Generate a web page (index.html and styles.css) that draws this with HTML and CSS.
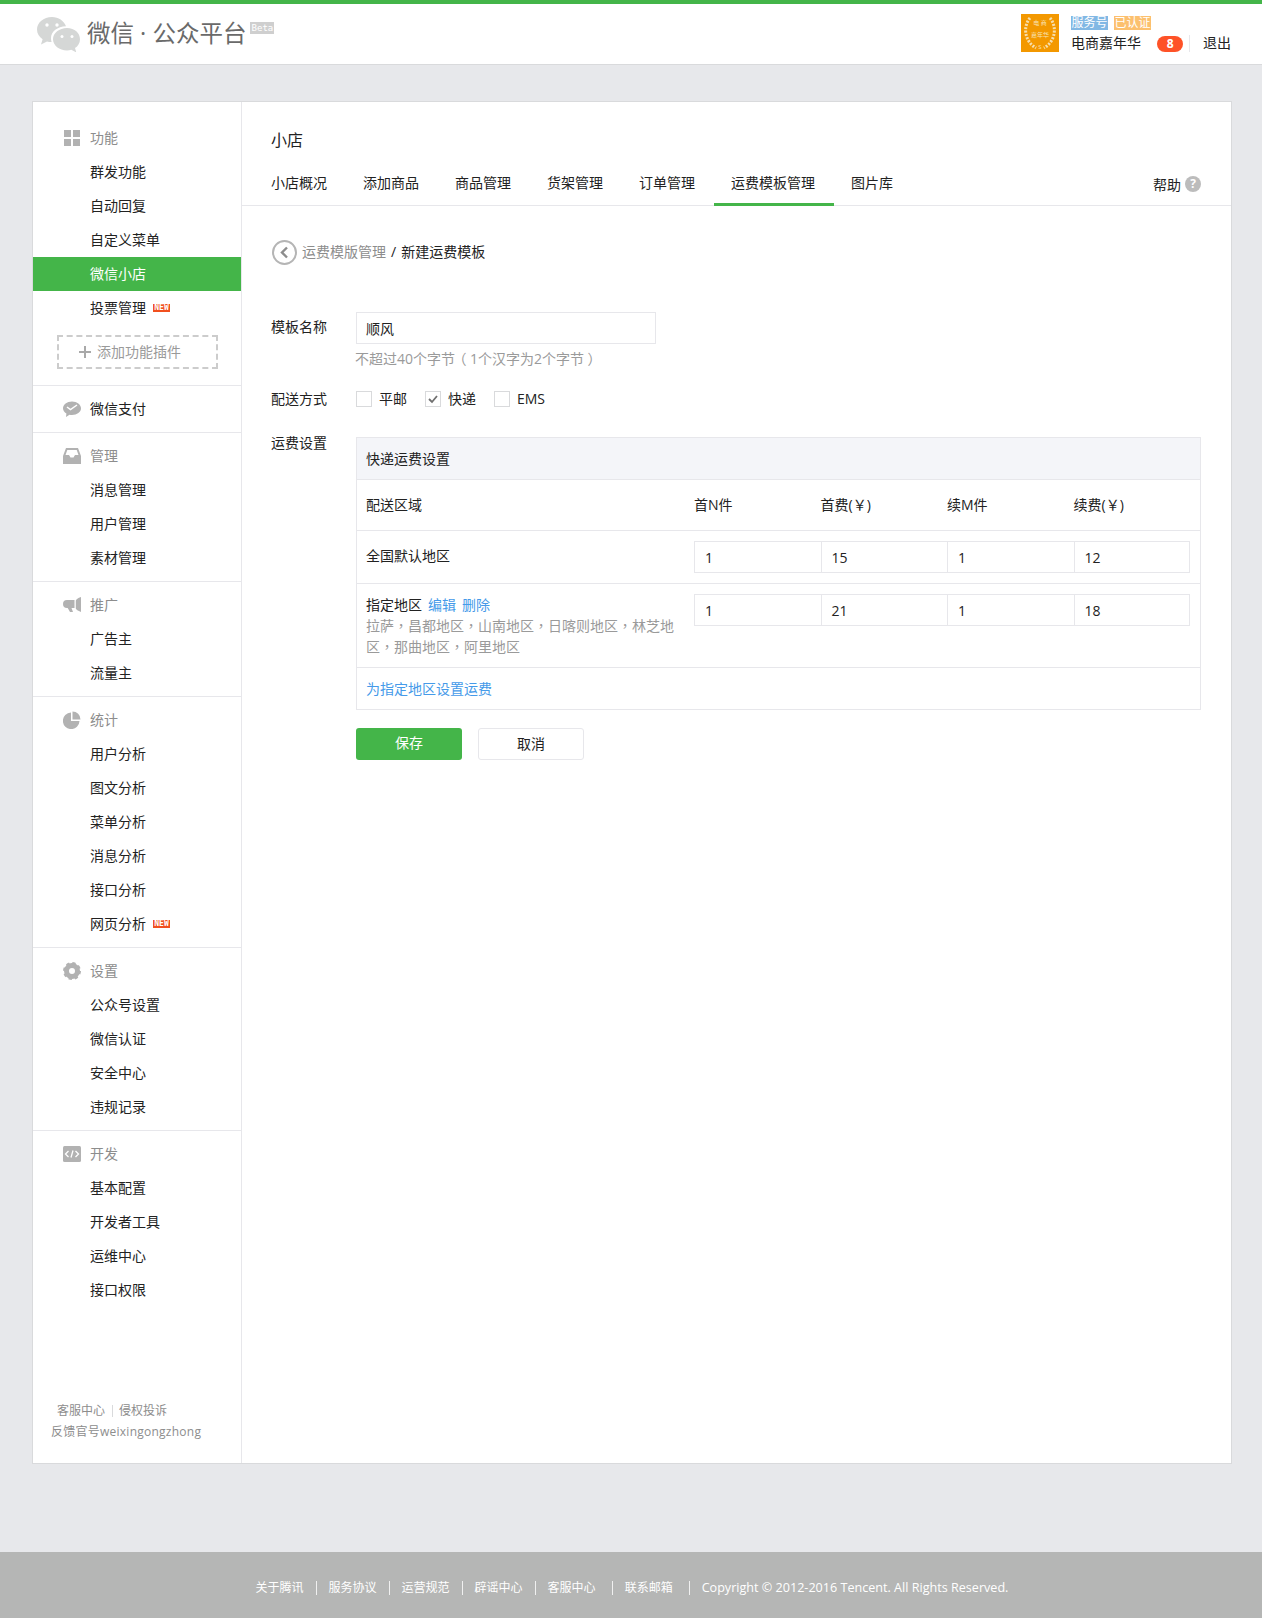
FILE: index.html
```html
<!DOCTYPE html>
<html lang="zh-CN">
<head>
<meta charset="utf-8">
<title>微信公众平台</title>
<link rel="stylesheet" href="styles.css">
</head>
<body>
<header class="top">
  <div class="brand">
    <svg class="logo" width="46" height="36" viewBox="0 0 46 36"><path fill="#d5d7d6" d="M16 1C7.500 1 1 6.600 1 13.600c0 4 2.200 7.400 5.600 9.700L5 28.500l6-3.100c1.500.4 3 .6 4.600.7-.4-1.300-.6-2.500-.6-3.800C15 15.700 21.500 10.500 30 10.300 27.900 4.900 22.500 1 16 1z"/><path fill="#d5d7d6" d="M31 12c-7.700 0-14 5-14 11.200S23.300 34.400 31 34.400c1.500 0 3-.2 4.300-.6l5 2.600-1.300-4.300c3-2.100 5-5.200 5-8.900C44 17 38.700 12 31 12z"/><circle cx="11" cy="9" r="1.700" fill="#fff"/><circle cx="21" cy="9" r="1.700" fill="#fff"/><circle cx="26" cy="20.500" r="1.500" fill="#fff"/><circle cx="36" cy="20.500" r="1.500" fill="#fff"/></svg>
    <span class="brand-name">微信 · 公众平台</span>
    <span class="beta">Beta</span>
  </div>
  <div class="account">
    <div class="avatar">
      <svg class="wreath" width="38" height="38" viewBox="0 0 38 38"><g fill="none" stroke="#f7dfae" stroke-width="3" stroke-dasharray="2 1.400"><path d="M9 4C2 12 3 27 15 34"/><path d="M29 4c7 8 6 23-6 30"/></g></svg>
      <span class="avatar-text">电 商<br>嘉年华<br>S</span>
    </div>
    <div class="acc-info">
      <div class="tags"><span class="tag tag-blue">服务号</span><span class="tag tag-yellow">已认证</span></div>
      <div class="acc-row"><span class="acc-name">电商嘉年华</span><span class="count">8</span><span class="acc-sep"></span><span class="logout">退出</span></div>
    </div>
  </div>
</header>

<div class="page">
  <div class="panel">
    <nav class="side">
      <section class="group group-first">
        <h4 class="g-title"><svg class="g-ico" width="18" height="18" viewBox="0 0 18 18"><path fill="#b2b2b2" d="M1 1h7v7H1zM10 1h7v7h-7zM1 10h7v7H1zM10 10h7v7h-7z"/></svg>功能</h4>
        <a class="item">群发功能</a>
        <a class="item">自动回复</a>
        <a class="item">自定义菜单</a>
        <a class="item item-on">微信小店</a>
        <a class="item">投票管理<span class="new">NEW</span></a>
        <div class="plugin"><svg class="plus" width="12" height="12" viewBox="0 0 12 12"><path fill="#a9a9a9" d="M5 0h2v5h5v2H7v5H5V7H0V5h5z"/></svg>添加功能插件</div>
      </section>
      <section class="group">
        <h4 class="g-title g-plain"><svg class="g-ico" width="18" height="18" viewBox="0 0 18 18"><path fill="#b2b2b2" d="M9 1.500c5 0 9 3 9 6.800s-4 6.700-9 6.700c-.9 0-1.700-.1-2.500-.3L3 17l.4-3.500C1.300 12.200 0 10.400 0 8.300 0 4.500 4 1.500 9 1.500z"/><path fill="none" stroke="#fff" stroke-width="1.500" d="M4 7l3.500 2.500L14 5"/></svg>微信支付</h4>
      </section>
      <section class="group">
        <h4 class="g-title"><svg class="g-ico" width="18" height="18" viewBox="0 0 18 18"><path fill="#b2b2b2" fill-rule="evenodd" d="M3 1h12l3 8v8H0V9zM4.300 3 2.500 8H6l1.500 2.500h3L12 8h3.500l-1.800-5z"/></svg>管理</h4>
        <a class="item">消息管理</a>
        <a class="item">用户管理</a>
        <a class="item">素材管理</a>
      </section>
      <section class="group">
        <h4 class="g-title"><svg class="g-ico" width="18" height="18" viewBox="0 0 18 18"><path fill="#b2b2b2" d="M4 4h7.500v8H8.500l1.500 4H7l-2.300-4H4a4 4 0 0 1 0-8zM18 1v15c-3-1.200-5-2.500-5.200-3.500V4.500C13 3.500 15 2 18 1z"/></svg>推广</h4>
        <a class="item">广告主</a>
        <a class="item">流量主</a>
      </section>
      <section class="group">
        <h4 class="g-title"><svg class="g-ico" width="18" height="18" viewBox="0 0 18 18"><path fill="#b2b2b2" d="M8 1.500V10h8.500A8.300 8.300 0 1 1 8 1.500zM9.500 .5a8 8 0 0 1 8 8h-8z"/></svg>统计</h4>
        <a class="item">用户分析</a>
        <a class="item">图文分析</a>
        <a class="item">菜单分析</a>
        <a class="item">消息分析</a>
        <a class="item">接口分析</a>
        <a class="item">网页分析<span class="new">NEW</span></a>
      </section>
      <section class="group">
        <h4 class="g-title"><svg class="g-ico" width="18" height="18" viewBox="0 0 18 18"><circle cx="9" cy="9" r="5.500" fill="none" stroke="#b2b2b2" stroke-width="5"/><circle cx="9" cy="9" r="8" fill="none" stroke="#b2b2b2" stroke-width="2" stroke-dasharray="3.300 3"/></svg>设置</h4>
        <a class="item">公众号设置</a>
        <a class="item">微信认证</a>
        <a class="item">安全中心</a>
        <a class="item">违规记录</a>
      </section>
      <section class="group">
        <h4 class="g-title"><svg class="g-ico" width="18" height="18" viewBox="0 0 18 18"><rect y="1" width="18" height="16" rx="1.500" fill="#b2b2b2"/><path fill="none" stroke="#fff" stroke-width="1.300" d="M5.500 6 2.500 9l3 3M12.500 6l3 3-3 3M10 5.500 8 12.500"/></svg>开发</h4>
        <a class="item">基本配置</a>
        <a class="item">开发者工具</a>
        <a class="item">运维中心</a>
        <a class="item">接口权限</a>
      </section>
      <div class="side-foot">
        <div class="sf-line1"><span class="sf-link">客服中心</span><span class="sf-link">侵权投诉</span></div>
        <div class="sf-line2">反馈官号weixingongzhong</div>
      </div>
    </nav>

    <main class="main">
      <h2 class="m-title">小店</h2>
      <div class="tabs">
        <a class="tab tab-first">小店概况</a>
        <a class="tab">添加商品</a>
        <a class="tab">商品管理</a>
        <a class="tab">货架管理</a>
        <a class="tab">订单管理</a>
        <a class="tab tab-on">运费模板管理</a>
        <a class="tab">图片库</a>
        <span class="help">帮助<span class="help-ico">?</span></span>
      </div>
      <div class="body">
        <div class="crumb">
          <svg class="back" width="25" height="25" viewBox="0 0 25 25"><circle cx="12.500" cy="12.500" r="11.500" fill="none" stroke="#b5b5b5" stroke-width="2"/><path fill="none" stroke="#8d8d8d" stroke-width="2.400" d="M15 7.500l-5 5 5 5"/></svg>
          <span class="crumb-link">运费模版管理</span><span class="crumb-sep">/</span><span class="crumb-now">新建运费模板</span>
        </div>

        <div class="f-row f-name">
          <label class="f-label">模板名称</label>
          <div class="f-ctl">
            <div class="input input-name">顺风</div>
            <p class="tip" lang="zh-TW">不超过40个字节<span class="paren">（</span>1个汉字为2个字节<span class="paren">）</span></p>
          </div>
        </div>

        <div class="f-row f-ship">
          <label class="f-label">配送方式</label>
          <div class="checks">
            <span class="check"><i class="box"></i>平邮</span>
            <span class="check"><i class="box"><svg width="14" height="14" viewBox="0 0 14 14"><path fill="none" stroke="#6f6f6f" stroke-width="1.800" d="M3 7l3 3 5-6"/></svg></i>快递</span>
            <span class="check"><i class="box"></i>EMS</span>
          </div>
        </div>

        <div class="f-row f-fee">
          <label class="f-label">运费设置</label>
          <div class="fee">
            <div class="fee-head">快递运费设置</div>
            <div class="fee-row fee-cols">
              <div class="area">配送区域</div>
              <div class="cols"><span>首N件</span><span>首费(￥)</span><span>续M件</span><span>续费(￥)</span></div>
            </div>
            <div class="fee-row fee-default">
              <div class="area">全国默认地区</div>
              <div class="cells"><span class="cell">1</span><span class="cell">15</span><span class="cell">1</span><span class="cell">12</span></div>
            </div>
            <div class="fee-row fee-custom">
              <div class="area">指定地区<a class="lnk lnk-a">编辑</a><a class="lnk lnk-b">删除</a>
                <p class="regions" lang="zh-TW">拉萨，昌都地区，山南地区，日喀则地区，林芝地区，那曲地区，阿里地区</p>
              </div>
              <div class="cells"><span class="cell">1</span><span class="cell">21</span><span class="cell">1</span><span class="cell">18</span></div>
            </div>
            <div class="fee-add"><a class="lnk">为指定地区设置运费</a></div>
          </div>
        </div>

        <div class="actions">
          <a class="btn btn-save">保存</a>
          <a class="btn btn-cancel">取消</a>
        </div>
      </div>
    </main>
  </div>
</div>

<footer class="foot">
  <a class="f-link">关于腾讯</a>
  <a class="f-link">服务协议</a>
  <a class="f-link">运营规范</a>
  <a class="f-link">辟谣中心</a>
  <a class="f-link f-wide-r">客服中心</a>
  <a class="f-link f-wide">联系邮箱</a>
  <span class="copy">Copyright © 2012-2016 Tencent. All Rights Reserved.</span>
</footer>
</body>
</html>
```

FILE: styles.css
```css
* { box-sizing: border-box; }
html, body { margin: 0; padding: 0; }
body {
  background: #e7e8eb;
  color: #222;
  font-family: "Open Sans", "Noto Sans CJK SC", sans-serif;
  font-size: 14px;
  line-height: 21px;
}
h2, h4, p { margin: 0; font-weight: 400; }

/* header */
.top {
  height: 65px;
  background: #fff;
  border-top: 4px solid #44b549;
  border-bottom: 1px solid #d9dadc;
  display: flex;
  justify-content: space-between;
  padding: 0 31px 0 36px;
}
.brand { display: flex; align-items: flex-start; }
.logo { margin-top: 12px; }
.brand-name { margin: 13px 0 0 5px; font-size: 23.5px; line-height: 32px; color: #6a6a6a; white-space: pre; }
.beta {
  margin: 18px 0 0 4px;
  width: 24px; height: 12px;
  background: #cfcfcf; color: #fff;
  font: 400 9px/12px "DejaVu Sans Mono", monospace;
  text-align: center;
}
.account { display: flex; align-items: flex-start; }
.avatar {
  position: relative;
  width: 38px; height: 38px;
  margin-top: 10px;
  padding-top: 4px;
  background: #f39800;
  display: flex; align-items: center; justify-content: center;
}
.wreath { position: absolute; left: 0; top: 0; }
.avatar-text { position: relative; font-size: 6px; line-height: 12px; color: #f7e3b8; text-align: center; }
.acc-info { margin-left: 12px; width: 160px; }
.tags { display: flex; gap: 6px; margin-top: 12px; height: 14px; }
.tag { width: 37px; height: 14px; color: #fff; font-size: 12px; line-height: 14px; text-align: center; }
.tag-blue { background: #82b8e4; }
.tag-yellow { background: #fcc06e; }
.acc-row { display: flex; align-items: center; margin-top: 5px; height: 17px; }
.acc-name { width: 87px; color: #222; white-space: nowrap; margin-bottom: 2px; }
.count {
  width: 26px; height: 16px; border-radius: 8px;
  background: #fe5227; color: #fff;
  font-size: 12px; font-weight: 700; line-height: 16px; text-align: center;
}
.acc-sep { width: 1px; height: 17px; background: #e7e7eb; margin: 0 13px 0 6px; }
.logout { white-space: nowrap; margin-bottom: 2px; }

/* panel */
.page { padding: 36px 30px 88px 32px; }
.panel {
  display: flex;
  height: 1363px;
  width: 1200px;
  background: #fff;
  border: 1px solid #d9dadc;
}

/* sidebar */
.side {
  width: 209px;
  flex: none;
  display: flex;
  flex-direction: column;
  border-right: 1px solid #e7e7eb;
}
.group { padding: 6px 0; border-top: 1px solid #e7e7eb; }
.group-first { padding: 19px 0 16px; border-top: 0; }
.g-title {
  display: flex; align-items: center;
  height: 34px;
  padding: 0 0 2px 30px;
  color: #8d8d8d;
  font-size: 14px;
}
.g-plain { color: #222; }
.g-ico { flex: none; margin: 2px 9px 0 0; }
.item {
  display: flex; align-items: center;
  height: 34px;
  padding: 0 0 2px 57px;
  color: #222;
}
.item-on { background: #44b549; color: #fff; }
.new {
  width: 17px; height: 8px; margin: 2px 0 0 7px;
  background: #f1501f; color: #fff;
  font: 700 8px/8px "DejaVu Sans Mono", monospace;
  text-align: center;
  overflow: hidden;
}
.plugin {
  display: flex; align-items: center;
  width: 161px; height: 34px;
  margin: 10px 0 0 24px;
  padding: 0 0 2px 20px;
  border: 2px dashed #ccc;
  color: #9a9a9a;
}
.plus { flex: none; margin: 2px 6px 0 0; }
.side-foot { margin-top: auto; padding-bottom: 21px; font-size: 12px; color: #8d8d8d; }
.sf-line1 { display: flex; padding-left: 24px; }
.sf-link + .sf-link { margin-left: 7px; padding-left: 7px; background: linear-gradient(#d9dadc, #d9dadc) left center / 1px 12px no-repeat; }
.sf-line2 { padding-left: 18px; letter-spacing: .25px; white-space: nowrap; }

/* main */
.main { flex: 1; min-width: 0; }
.m-title { margin: 26px 30px 0 29px; font-size: 16px; line-height: 24px; color: #222; }
.tabs {
  display: flex;
  position: relative;
  height: 41px;
  margin-top: 13px;
  padding: 0 30px;
  border-bottom: 1px solid #e7e7eb;
}
.tab { height: 41px; padding: 0 19px 0 17px; line-height: 35px; color: #222; }
.tab-first { margin-left: -1px; padding-left: 0; }
.tab-on { border-bottom: 3px solid #44b549; }
.help { display: flex; align-items: center; margin-left: auto; height: 38px; }
.help-ico {
  width: 16px; height: 16px; margin-left: 4px;
  border-radius: 50%;
  background: #bcbcbc; color: #fff;
  font-size: 12px; font-weight: 700; line-height: 16px; text-align: center;
}
.body { padding: 34px 30px 0; }
.crumb { display: flex; align-items: center; height: 25px; }
.crumb > span { margin-bottom: 2px; }
.back { margin-right: 5px; }
.crumb-link { color: #8d8d8d; }
.crumb-sep { margin: 0 5px; }
.f-row { display: flex; }
.f-label { width: 85px; margin-left: -1px; flex: none; }
.f-name { margin-top: 47px; }
.f-name .f-label { padding-top: 4px; }
.input { width: 300px; height: 32px; border: 1px solid #e7e7eb; padding: 0 9px; line-height: 32px; }
.tip { margin: 4px 0 0 -1px; color: #9a9a9a; font-family: "Open Sans", "Noto Sans CJK TC", sans-serif; white-space: nowrap; }
.paren { display: inline-block; width: 15px; text-align: center; font-feature-settings: "palt"; }
.f-ship { margin-top: 19px; align-items: center; }
.checks { display: flex; gap: 18px; }
.check { display: flex; align-items: center; }
.box {
  display: flex; align-items: center; justify-content: center;
  width: 16px; height: 16px; margin-right: 7px;
  border: 1px solid #d9dadc;
}
.f-fee { margin-top: 23px; }
.fee { flex: 1; margin-top: 5px; border: 1px solid #e7e7eb; }
.fee-head { height: 42px; padding: 0 10px 0 9px; background: #f4f5f9; border-bottom: 1px solid #e7e7eb; line-height: 41px; }
.fee-row { display: grid; grid-template-columns: 1fr 496px; padding: 0 10px 0 9px; border-bottom: 1px solid #e7e7eb; }
.fee-cols { height: 51px; line-height: 50px; }
.cols, .cells { display: grid; grid-template-columns: 126.5px 126.5px 126.5px 116.5px; }
.fee-default { height: 53px; padding-top: 10px; }
.fee-default .area { line-height: 29px; }
.fee-custom { height: 84px; padding-top: 10px; }
.area { white-space: nowrap; }
.cell { height: 32px; margin-right: -1px; padding: 0 10px; border: 1px solid #e7e7eb; line-height: 32px; }
.cell:last-child { margin-right: 0; }
.lnk { color: #459ae9; }
.lnk-a { margin-left: 6px; }
.lnk-b { margin-left: 6px; }
.regions { width: 316px; white-space: normal; color: #9a9a9a; font-family: "Open Sans", "Noto Sans CJK TC", sans-serif; }
.fee-add { height: 41px; padding: 0 10px 0 9px; line-height: 41px; }
.actions { display: flex; gap: 16px; margin: 18px 0 0 84px; }
.btn { width: 106px; height: 32px; border-radius: 3px; text-align: center; line-height: 30px; }
.btn-save { background: #44b549; color: #fff; }
.btn-cancel { border: 1px solid #e7e7eb; color: #222; }

/* footer */
.foot {
  display: flex;
  justify-content: center;
  align-items: center;
  height: 66px;
  padding: 5px 10px 0 0;
  background: #b5b6b5;
  color: #fff;
  font-size: 12px;
}
.f-link { padding: 0 12px; line-height: 14px; border-right: 1px solid #f0f0f0; }
.f-wide-r { padding-right: 16px; }
.f-wide { padding: 0 16px 0 12px; }
.copy { margin-left: 12px; font-size: 12.6px; white-space: nowrap; }
```
